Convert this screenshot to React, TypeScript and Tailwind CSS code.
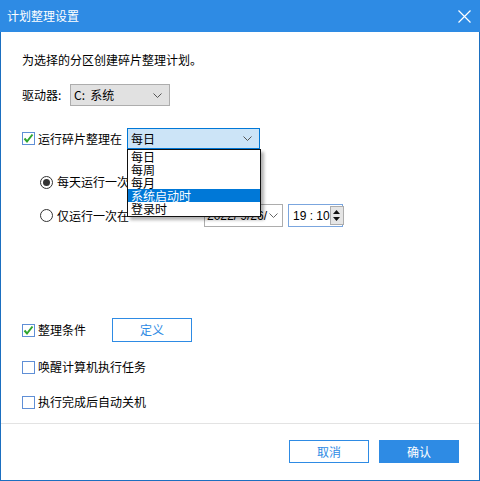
import { ReactNode } from "react";

const font = { fontFamily: '"Noto Sans CJK SC", "Liberation Sans", sans-serif' };
const latin = { fontFamily: '"Liberation Sans", "Noto Sans CJK SC", sans-serif' };

function Chevron({ color = "#555" }: { color?: string }) {
  return (
    <svg width="9" height="5" viewBox="0 0 9 5" fill="none" className="shrink-0">
      <path d="M0.5 0.5 L4.5 4.5 L8.5 0.5" stroke={color} strokeWidth="1" />
    </svg>
  );
}

function CheckBox({ checked }: { checked?: boolean }) {
  return (
    <svg width="13" height="13" viewBox="0 0 13 13" className="shrink-0">
      <rect x="0.5" y="0.5" width="12" height="12" fill="white" stroke="#5f8fd6" />
      {checked && (
        <path d="M2.5 6.5 L5 9.5 L10.5 2.5" fill="none" stroke="#2fa52f" strokeWidth="2" />
      )}
    </svg>
  );
}

function Radio({ checked }: { checked?: boolean }) {
  return (
    <svg width="13" height="13" viewBox="0 0 13 13" className="shrink-0">
      <circle cx="6.5" cy="6.5" r="6" fill="white" stroke="#333" />
      {checked && <circle cx="6.5" cy="6.5" r="3.5" fill="#333" />}
    </svg>
  );
}

function Row({ children, className = "" }: { children: ReactNode; className?: string }) {
  return <div className={"flex items-center whitespace-nowrap " + className}>{children}</div>;
}

export default function App() {
  return (
    <div
      style={font}
      className="relative w-[480px] h-[481px] bg-white border-x border-b border-[#1b6fc0] flex flex-col text-[12px] text-black leading-none"
    >
      <div className="h-[32px] bg-[#2e8be4] -mx-px flex items-center justify-between pl-[7px] pr-[9px] text-white shrink-0">
        <span>计划整理设置</span>
        <svg width="13" height="13" viewBox="0 0 13 13">
          <path d="M0.5 0.5 L12.5 12.5 M12.5 0.5 L0.5 12.5" stroke="white" strokeWidth="1.2" />
        </svg>
      </div>

      <div className="flex flex-col pl-[21px] pr-[20px]">
        <Row className="mt-[18px] h-[20px]">为选择的分区创建碎片整理计划。</Row>

        <Row className="mt-[14px] h-[22px]">
          <span className="w-[48px]">驱动器:</span>
          <div className="w-[100px] h-[22px] bg-[#e1e1e1] border border-[#adadad] flex items-center justify-between pl-[3px] pr-[7px]">
            <span>C:&nbsp;&nbsp;系统</span>
            <Chevron />
          </div>
        </Row>

        <Row className="mt-[22px] h-[21px]">
          <CheckBox checked />
          <span className="ml-[3px] w-[89px]">运行碎片整理在</span>
          <div className="w-[133px] h-[21px] bg-[#cce4f7] border border-[#0078d7] flex items-center justify-between pl-[3px] pr-[7px]">
            <span>每日</span>
            <Chevron />
          </div>
        </Row>

        <Row className="mt-[23px] h-[20px] pl-[18px]">
          <Radio checked />
          <span className="ml-[4px]">每天运行一次在</span>
        </Row>

        <Row className="mt-[12px] h-[23px] pl-[18px]">
          <Radio />
          <span className="ml-[4px] w-[147px]">仅运行一次在</span>
          <div className="w-[79px] h-[23px] border border-[#adadad] flex items-center justify-between pl-[2px] pr-[4px]">
            <span style={latin}>2022/ 9/26/</span>
            <Chevron color="#666" />
          </div>
          <div className="ml-[5px] w-[55px] h-[23px] border border-[#7ba6de] flex items-center justify-between pl-[4px] pr-[1px]">
            <span style={latin}>19 : 10</span>
            <div className="w-[14px] h-[19px] bg-[#e5e5e5] border border-[#adadad] flex flex-col items-center justify-center gap-[3px] shrink-0">
              <svg width="7" height="4" viewBox="0 0 7 4">
                <path d="M0 4 L3.5 0 L7 4 Z" fill="#111" />
              </svg>
              <svg width="7" height="4" viewBox="0 0 7 4">
                <path d="M0 0 L3.5 4 L7 0 Z" fill="#111" />
              </svg>
            </div>
          </div>
        </Row>

        <Row className="mt-[91px] h-[24px]">
          <CheckBox checked />
          <span className="ml-[3px] w-[74px]">整理条件</span>
          <button className="w-[80px] h-[24px] border border-[#2e8be4] text-[#2e8be4] bg-white">定义</button>
        </Row>

        <Row className="mt-[15px] h-[20px]">
          <CheckBox />
          <span className="ml-[3px]">唤醒计算机执行任务</span>
        </Row>

        <Row className="mt-[15px] h-[20px]">
          <CheckBox />
          <span className="ml-[3px]">执行完成后自动关机</span>
        </Row>
      </div>

      <div className="mt-[11px] h-px bg-[#e3e3e3]" />

      <div className="mt-[16px] flex justify-end gap-[10px] pr-[20px]">
        <button className="w-[80px] h-[23px] border border-[#2e8be4] text-[#2e8be4] bg-white">取消</button>
        <button className="w-[80px] h-[23px] bg-[#2e8be4] text-white">确认</button>
      </div>

      <div className="absolute left-[126px] top-[149px] w-[134px] h-[68px] bg-white border border-[#111] shadow-[3px_3px_3px_rgba(0,0,0,0.3)] flex flex-col pl-[3px] pr-0 text-[12px] leading-[13px]">
        <div className="h-[13px]">每日</div>
        <div className="h-[13px]">每周</div>
        <div className="h-[13px]">每月</div>
        <div className="h-[13px] bg-[#0078d7] text-white -ml-[3px] pl-[3px]">系统启动时</div>
        <div className="h-[13px]">登录时</div>
      </div>
    </div>
  );
}
